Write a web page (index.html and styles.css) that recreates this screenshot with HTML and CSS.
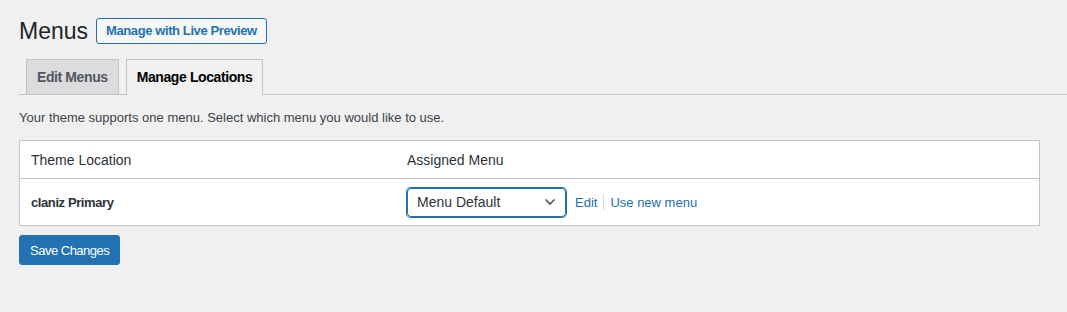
FILE: index.html
```html
<!DOCTYPE html>
<html lang="en">
<head>
    <meta charset="UTF-8">
    <title>Menus</title>
    <link rel="stylesheet" href="styles.css">
</head>
<body>
    <div class="wrap">
        <div class="page-head">
            <h1>Menus</h1>
            <a class="btn-outline" href="#">Manage with Live Preview</a>
        </div>

        <nav class="nav-tabs">
            <a class="nav-tab" href="#">Edit Menus</a>
            <a class="nav-tab active" href="#">Manage Locations</a>
        </nav>

        <p class="desc">Your theme supports one menu. Select which menu you would like to use.</p>

        <table class="locations">
            <thead>
                <tr>
                    <th class="col-loc">Theme Location</th>
                    <th>Assigned Menu</th>
                </tr>
            </thead>
            <tbody>
                <tr>
                    <td class="loc-name">claniz Primary</td>
                    <td>
                        <div class="assign">
                            <div class="select">
                                <span>Menu Default</span>
                                <svg width="12" height="8" viewBox="0 0 12 8"><path d="M1.5 1.5 6 6l4.5-4.5" fill="none" stroke="#50575e" stroke-width="1.6"/></svg>
                            </div>
                            <a href="#">Edit</a>
                            <span class="sep"></span>
                            <a href="#">Use new menu</a>
                        </div>
                    </td>
                </tr>
            </tbody>
        </table>

        <button class="btn-primary">Save Changes</button>
    </div>
</body>
</html>
```

FILE: styles.css
```css
body {
    margin: 0;
    background-color: #f0f0f1;
    color: #3c434a;
    font-family: "Liberation Sans", Arial, sans-serif;
    font-size: 13px;
}

a {
    color: #2271b1;
    text-decoration: none;
}

.wrap {
    padding: 18px 27px 0 19px;
}

.page-head {
    display: flex;
    align-items: center;
    gap: 8px;
}

h1 {
    margin: 0;
    font-size: 23px;
    font-weight: 400;
    color: #1d2327;
    line-height: 26px;
}

.btn-outline {
    border: 1px solid #2271b1;
    border-radius: 3px;
    background-color: #f6f7f7;
    font-weight: 600;
    letter-spacing: -0.4px;
    padding: 0 9px;
    line-height: 24px;
}

.nav-tabs {
    display: flex;
    gap: 7px;
    margin: 15px -27px 0 0;
    padding-left: 7px;
    border-bottom: 1px solid #c3c4c7;
}

.nav-tab {
    border: 1px solid #c3c4c7;
    border-bottom: none;
    background-color: #dcdcde;
    color: #50575e;
    font-size: 14px;
    font-weight: 600;
    letter-spacing: -0.4px;
    padding: 0 10px;
    line-height: 34px;
}

.nav-tab.active {
    background-color: #f0f0f1;
    color: #000;
    margin-bottom: -1px;
    line-height: 35px;
}

.desc {
    margin: 14px 0 13px;
    line-height: 18px;
}

.locations {
    width: 100%;
    border-collapse: collapse;
    background-color: #fff;
    border: 1px solid #c3c4c7;
}

.locations th {
    text-align: left;
    font-weight: 400;
    color: #2c3338;
    font-size: 14px;
    height: 37px;
    padding: 0 11px;
    border-bottom: 1px solid #c3c4c7;
}

.locations th.col-loc {
    width: 354px;
}

.locations td {
    height: 46px;
    padding: 0 11px;
}

.loc-name {
    font-weight: 600;
    letter-spacing: -0.4px;
    color: #2c3338;
}

.assign {
    display: flex;
    align-items: center;
}

.select {
    width: 139px;
    height: 27px;
    display: flex;
    align-items: center;
    justify-content: space-between;
    padding: 0 9px 0 9px;
    border: 1px solid #2271b1;
    border-radius: 4px;
    box-shadow: 0 0 0 1px #2271b1;
    color: #2c3338;
    font-size: 14px;
    margin-right: 9px;
}

.sep {
    width: 1px;
    height: 16px;
    background-color: #dcdcde;
    margin: 0 6px;
}

.btn-primary {
    margin-top: 9px;
    background-color: #2271b1;
    color: #fff;
    border: 1px solid #2271b1;
    border-radius: 3px;
    font-family: inherit;
    font-size: 13px;
    letter-spacing: -0.5px;
    height: 30px;
    padding: 0 10px;
}
```
